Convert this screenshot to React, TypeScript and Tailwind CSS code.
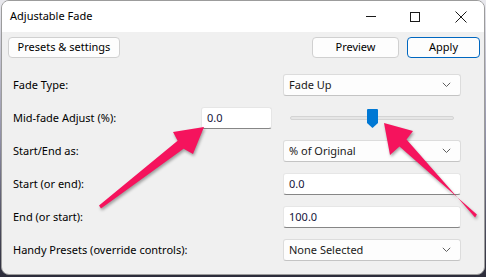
import React from "react";

const font = { fontFamily: '"Noto Sans", "Segoe UI", sans-serif' };

const Chevron: React.FC = () => (
  <svg width="9" height="6" viewBox="0 0 9 6" className="shrink-0">
    <path d="M0.8 0.8 L4.5 4.5 L8.2 0.8" fill="none" stroke="#5f5f5f" strokeWidth="1" />
  </svg>
);

const Select: React.FC<{ value: string }> = ({ value }) => (
  <div className="flex h-[22px] w-[178px] items-center justify-between rounded-[3px] border border-[#dcdcdc] border-b-[#c4c4c4] bg-[#fdfdfd] pl-[5px] pr-[9px] text-[11px] text-[#1a1a1a]">
    <span>{value}</span>
    <Chevron />
  </div>
);

const TextBox: React.FC<{ value: string; w: string }> = ({ value, w }) => (
  <div
    className={`flex h-[22px] ${w} items-center rounded-[3px] border border-[#e6e6e6] border-b-[#868686] bg-white pl-[5px] text-[11px] text-[#14143a]`}
  >
    {value}
  </div>
);

const Row: React.FC<{ label: string; children: React.ReactNode }> = ({ label, children }) => (
  <div className="mb-[11px] flex h-[22px] items-center">
    <div className="flex-1 text-[11px] text-black">{label}</div>
    {children}
  </div>
);

const App: React.FC = () => {
  return (
    <div
      className="relative h-[277px] w-[486px] overflow-hidden bg-gradient-to-b from-[#e9e9ee] via-[#8f8fa6] to-[#2c2c3a]"
      style={font}
    >
      <div className="ml-px flex h-[275px] w-[484px] flex-col overflow-hidden rounded-[8px] border border-[#9c9c9c] bg-[#f0f0f0]">
        {/* title bar */}
        <div className="flex h-[31px] items-center bg-white">
          <div className="flex-1 pl-[8px] text-[11px] text-black">Adjustable Fade</div>
          <div className="flex h-full w-[42px] items-center justify-center">
            <div className="h-px w-[10px] bg-[#1a1a1a]" />
          </div>
          <div className="flex h-full w-[46px] items-center justify-center">
            <div className="h-[10px] w-[10px] border border-[#1a1a1a]" />
          </div>
          <div className="flex h-full w-[46px] items-center justify-center">
            <svg width="12" height="12" viewBox="0 0 12 12">
              <path d="M0.5 0.5 L11.5 11.5 M11.5 0.5 L0.5 11.5" stroke="#1a1a1a" strokeWidth="1" />
            </svg>
          </div>
        </div>

        {/* toolbar */}
        <div className="flex items-center pl-[6px] pr-[4px] pt-[5px]">
          <button className="h-[21px] w-[112px] rounded-[4px] border border-[#d0d0d0] bg-[#fdfdfd] text-[11px] text-black">
            Presets &amp; settings
          </button>
          <div className="flex-1" />
          <button className="h-[21px] w-[87px] rounded-[4px] border border-[#d0d0d0] bg-[#fdfdfd] text-[11px] text-black">
            Preview
          </button>
          <button className="ml-[8px] h-[21px] w-[73px] rounded-[4px] border border-[#0067c0] bg-[#fdfdfd] text-[11px] text-black">
            Apply
          </button>
        </div>

        {/* form */}
        <div className="pl-[11px] pr-[23px] pt-[16px]">
          <Row label="Fade Type:">
            <Select value="Fade Up" />
          </Row>
          <Row label="Mid-fade Adjust (%):">
            <div className="flex items-center">
              <TextBox value="0.0" w="w-[71px]" />
              <div className="relative ml-[11px] flex h-[22px] w-[178px] items-center px-[7px]">
                <div className="h-[4px] w-full rounded-[2px] border border-[#d4d4d4] bg-[#e6e6e6]" />
                <svg
                  width="11"
                  height="19"
                  viewBox="0 0 11 19"
                  className="absolute left-[84px] top-[2px]"
                >
                  <path d="M1 0 H10 Q11 0 11 1 V14 L5.5 19 L0 14 V1 Q0 0 1 0 Z" fill="#0078d4" />
                </svg>
              </div>
            </div>
          </Row>
          <Row label="Start/End as:">
            <Select value="% of Original" />
          </Row>
          <Row label="Start (or end):">
            <TextBox value="0.0" w="w-[178px]" />
          </Row>
          <Row label="End (or start):">
            <TextBox value="100.0" w="w-[178px]" />
          </Row>
          <Row label="Handy Presets (override controls):">
            <Select value="None Selected" />
          </Row>
        </div>
      </div>

      {/* annotation arrows */}
      <svg
        className="pointer-events-none absolute left-0 top-0"
        width="486"
        height="277"
        viewBox="0 0 486 277"
        style={{ filter: "drop-shadow(1px 2px 1.5px rgba(0,0,0,0.35))" }}
      >
        <polygon
          points="99,205.6 177.6,140.8 173,132 204,127 193,154 183.6,148.8 101,208.4"
          fill="#f5135d"
        />
        <polygon
          points="476.9,214.5 399.5,146.5 390,155 384,123 413,131 406.5,139.5 475.1,217.5"
          fill="#f5135d"
        />
      </svg>
    </div>
  );
};

export default App;
